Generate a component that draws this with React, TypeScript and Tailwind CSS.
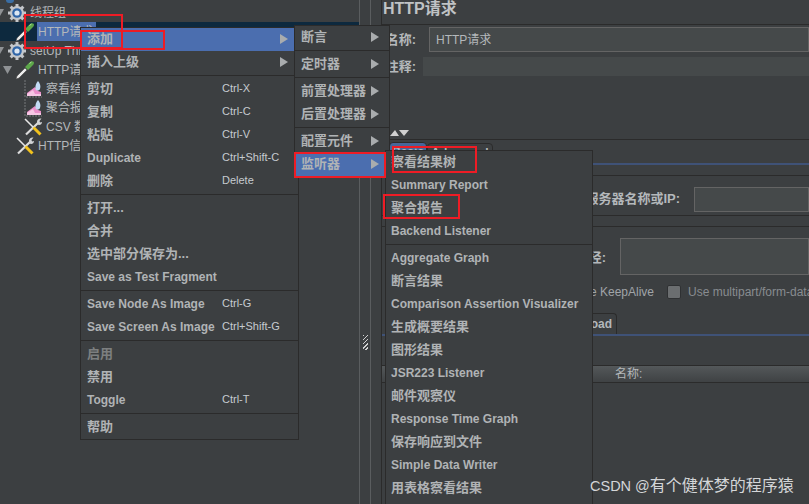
import React from "react";

const FONT = "[font-family:'Liberation_Sans','Noto_Sans_CJK_SC',sans-serif]";

type Item = { t?: string; k?: string; arrow?: boolean; hi?: boolean; dim?: boolean; sep?: boolean; h?: number };

const Arrow = () => (
  <svg width="8" height="10" viewBox="0 0 8 10" className="shrink-0">
    <path d="M0 0L8 5L0 10Z" fill="#a9acae" />
  </svg>
);

function Menu({ items, className, keyX, pad }: { items: Item[]; className: string; keyX?: string; pad?: string }) {
  return (
    <div className={`absolute flex flex-col border border-[#2b2b2b] bg-[#3c3f41] ${className}`}>
      {items.map((it, i) =>
        it.sep ? (
          <div key={i} className="mt-[1px] mb-[2px] h-[1px] shrink-0 bg-[#2b2b2b]" />
        ) : (
          <div
            key={i}
            className={`flex h-[23px] shrink-0 items-center pb-[2px] ${pad ?? "pl-[6px]"} pr-[10px] font-bold whitespace-nowrap ${
              /^[\x00-\x7f]+$/.test(it.t ?? "") ? "text-[12px]" : "text-[13px]"
            } ${it.hi ? "bg-[#4b6eaf]" : ""} ${it.dim ? "text-[#7d7f80]" : "text-[#b0b3b5]"}`}
          >
            <span className={`${keyX ?? ""} shrink-0`}>{it.t}</span>
            {it.k && <span className="text-[11px] font-normal text-[#c6cbd0]">{it.k}</span>}
            {it.arrow && (
              <span className="ml-auto">
                <Arrow />
              </span>
            )}
          </div>
        )
      )}
    </div>
  );
}

const Gear = () => (
  <svg width="18" height="18" viewBox="0 0 18 18" className="shrink-0">
    <g fill="#c4c7cb">
      <circle cx="9" cy="9" r="7" />
      {[0, 45, 90, 135, 180, 225, 270, 315].map((a) => (
        <rect key={a} x="7.5" y="0" width="3" height="4" transform={`rotate(${a} 9 9)`} />
      ))}
    </g>
    <circle cx="9" cy="9" r="4.8" fill="#2f65a8" />
    <circle cx="9" cy="9" r="2.6" fill="#dbe6f2" />
  </svg>
);

const Dropper = () => (
  <svg width="20" height="20" viewBox="0 0 20 20" className="shrink-0">
    <path d="M1 19L2 16L10 8L12 10L4 18Z" fill="#ececec" stroke="#4a4a4a" strokeWidth="0.6" />
    <path d="M10 7L15 2C16 1 18 1 18.6 1.8C19.4 2.6 19 4 18 5L13 10Z" fill="#5da84a" />
    <path d="M14.5 3.5L16.5 2" stroke="#b8e6a4" strokeWidth="1" />
  </svg>
);

const Graph = () => (
  <svg width="18" height="18" viewBox="0 0 18 18" className="shrink-0">
    <path d="M1 0V17H18" stroke="#777a7c" fill="none" strokeWidth="1" strokeDasharray="2 1" />
    <path d="M3 16V13L11 7L14 11L17 12V16Z" fill="#ea8fcb" />
    <path d="M3 16V14L9 10L11 14L17 14V16Z" fill="#f6c6e4" />
    <path d="M14 1C16 3 17 6 16 9C15 11 12.5 11 11.5 9C11 6 12 3 14 1Z" fill="#c4dcf6" />
  </svg>
);

const Tools = () => (
  <svg width="18" height="18" viewBox="0 0 18 18" className="shrink-0">
    <path d="M1 1L9 9" stroke="#e8e8e8" strokeWidth="1.6" />
    <path d="M15 4L2 16.5" stroke="#dcdcdc" strokeWidth="2.2" />
    <path d="M9.5 9.5L16.5 16.5" stroke="#f2c21d" strokeWidth="3" />
    <path d="M13 3.5C13 1.5 15 0 17.5 0.5L15.5 3L16 4.5L18 4C18 6.5 15.5 7.5 13.5 6.5Z" fill="#d2d4d6" />
  </svg>
);

const Tri = ({ c }: { c: string }) => (
  <svg width="9" height="8" viewBox="0 0 9 8" className={`shrink-0 ${c}`}>
    <path d="M0 0H9L4.5 8Z" fill="#8f9295" />
  </svg>
);

function Row({
  pad,
  icon,
  text,
  tri,
  selected,
  tight,
}: {
  pad: string;
  icon: React.ReactNode;
  text: string;
  tri?: string;
  selected?: boolean;
  tight?: boolean;
}) {
  return (
    <div className={`flex h-[19px] shrink-0 items-center ${pad} ${selected ? "bg-[#0d293e]" : ""}`}>
      {tri && <Tri c={tri} />}
      {icon}
      <span
        className={`${tight ? "ml-[2px]" : "ml-[3px]"} h-[19px] pr-[3px] pl-[1px] text-[12px] leading-[20px] whitespace-nowrap text-[#b4b8bb] ${
          selected ? "bg-[#4b6eaf]" : ""
        }`}
      >
        {text}
      </span>
    </div>
  );
}

const Red = ({ c }: { c: string }) => <div className={`absolute border-2 border-[#ee1c25] ${c}`} />;

const main: Item[] = [
  { t: "添加", arrow: true, hi: true },
  { t: "插入上级", arrow: true },
  { sep: true },
  { t: "剪切", k: "Ctrl-X" },
  { t: "复制", k: "Ctrl-C" },
  { t: "粘贴", k: "Ctrl-V" },
  { t: "Duplicate", k: "Ctrl+Shift-C" },
  { t: "删除", k: "Delete" },
  { sep: true },
  { t: "打开..." },
  { t: "合并" },
  { t: "选中部分保存为..." },
  { t: "Save as Test Fragment" },
  { sep: true },
  { t: "Save Node As Image", k: "Ctrl-G" },
  { t: "Save Screen As Image", k: "Ctrl+Shift-G" },
  { sep: true },
  { t: "启用", dim: true },
  { t: "禁用" },
  { t: "Toggle", k: "Ctrl-T" },
  { sep: true },
  { t: "帮助" },
];

const sub: Item[] = [
  { t: "断言", arrow: true },
  { sep: true },
  { t: "定时器", arrow: true },
  { sep: true },
  { t: "前置处理器", arrow: true },
  { t: "后置处理器", arrow: true },
  { sep: true },
  { t: "配置元件", arrow: true },
  { t: "监听器", arrow: true, hi: true },
];

const listeners: Item[] = [
  { t: "察看结果树" },
  { t: "Summary Report" },
  { t: "聚合报告" },
  { t: "Backend Listener" },
  { sep: true },
  { t: "Aggregate Graph" },
  { t: "断言结果" },
  { t: "Comparison Assertion Visualizer" },
  { t: "生成概要结果" },
  { t: "图形结果" },
  { t: "JSR223 Listener" },
  { t: "邮件观察仪" },
  { t: "Response Time Graph" },
  { t: "保存响应到文件" },
  { t: "Simple Data Writer" },
  { t: "用表格察看结果" },
];

export default function App() {
  return (
    <div className={`relative flex h-[504px] w-[809px] overflow-hidden bg-[#3c3f41] ${FONT}`}>
      {/* tree */}
      <div className="relative flex w-[360px] shrink-0 flex-col border-r border-[#5a5d5f] pt-[3px]">
        <div className="absolute top-0 left-[6px] h-[3px] w-[8px] rounded-b-sm bg-[#3a6ea5]" />
        <Row pad="pl-0" tri="-ml-[5px] mr-[4px]" icon={<Gear />} text="线程组" />
        <Row pad="pl-[15px]" tight icon={<Dropper />} text="HTTP请求" selected />
        <Row pad="pl-0" tri="-ml-[5px] mr-[4px]" icon={<Gear />} text="setUp Thread Group" />
        <Row pad="pl-[3px]" tri="mr-[3px]" tight icon={<Dropper />} text="HTTP请求" />
        <Row pad="pl-[24px]" icon={<Graph />} text="察看结果树" />
        <Row pad="pl-[24px]" icon={<Graph />} text="聚合报告" />
        <Row pad="pl-[24px]" icon={<Tools />} text="CSV 数据文件设置" />
        <Row pad="pl-[16px]" icon={<Tools />} text="HTTP信息头管理器" />
      </div>

      {/* divider */}
      <div className="flex w-[11px] shrink-0 flex-col items-center border-r border-[#5a5d5f] pt-[335px]">
        <div className="h-[15px] w-[5px] bg-[repeating-linear-gradient(135deg,#d0d0d0_0_1px,#3c3f41_1px_3px)]" />
      </div>

      {/* form */}
      <div className="ml-[10px] flex min-w-0 flex-1 flex-col border-l border-[#2b2b2b] text-[#b4b8bb]">
        <div className="h-[25px] shrink-0 border-b border-[#2b2b2b] pt-[1px] pl-[1px] text-[16px] leading-[16px] font-bold text-[#c0c3c5]">
          HTTP请求
        </div>
        <div className="mt-[2px] flex h-[25px] shrink-0 items-center">
          <span className="w-[47px] shrink-0 pr-[13px] text-right text-[13px] font-bold whitespace-nowrap">名称:</span>
          <div className="flex h-[25px] flex-1 items-center border border-[#646464] bg-[#45494a] pl-[6px] text-[12px]">
            HTTP请求
          </div>
        </div>
        <div className="mt-[5px] flex h-[19px] shrink-0 items-center">
          <span className="w-[41px] shrink-0 pr-[7px] text-right text-[13px] font-bold whitespace-nowrap">注释:</span>
          <div className="h-[19px] flex-1 bg-[#45494a]" />
        </div>
        <div className="mt-[54px] flex h-[9px] shrink-0 pl-[8px]">
          <svg width="20" height="6" viewBox="0 0 20 6" className="shrink-0">
            <path d="M0 6L5 0L9 6Z" fill="#d0d0d0" />
            <path d="M9 0H19L14 6Z" fill="#d0d0d0" />
          </svg>
        </div>
        <div className="flex h-[24px] shrink-0 items-start border-t border-[#2b2b2b] pt-[2px]">
          <div className="ml-[7px] h-[21px] w-[38px] rounded-t border border-[#2b2b2b] bg-[#47669a] text-center text-[12px] font-bold">
            Basic
          </div>
          <div className="mt-[1px] h-[20px] w-[66px] rounded-t border border-[#2b2b2b] text-center text-[12px] font-bold">
            Advanced
          </div>
        </div>
        <div className="h-[2px] shrink-0 bg-[#3f5277]" />
        <div className="mt-[10px] flex h-[41px] shrink-0 items-start justify-end border-y border-[#2b2b2b] pt-[11px]">
          <span className="mr-[14px] text-[13px] leading-[24px] font-bold whitespace-nowrap">服务器名称或IP:</span>
          <div className="h-[25px] w-[115px] shrink-0 border border-[#646464] bg-[#45494a]" />
        </div>
        <div className="mt-[10px] flex h-[49px] shrink-0 items-start justify-end border-t border-[#2b2b2b] pt-[11px]">
          <span className="mt-[10px] mr-[14px] text-[13px] font-bold whitespace-nowrap">路径:</span>
          <div className="h-[37px] w-[189px] shrink-0 border border-[#646464] bg-[#45494a]" />
        </div>
        <div className="mt-[10px] flex h-[14px] shrink-0 items-center justify-end text-[12px] whitespace-nowrap text-[#a0a4a8]">
          <span className="mr-[13px]">Use KeepAlive</span>
          <span className="mr-[7px] h-[14px] w-[14px] shrink-0 rounded-[2px] border border-[#2f3133] bg-[#6b6e70]" />
          <span className="w-[121px] shrink-0 overflow-hidden text-[#888c90]">Use multipart/form-data for POST</span>
        </div>
        <div className="mt-[14px] flex h-[23px] shrink-0 items-end border-b-[2px] border-[#3f5277]">
          <div className="ml-[200px] flex h-[21px] w-[35px] items-center justify-end rounded-tr border-t border-r border-[#2b2b2b] pr-[4px] text-[12px] font-bold whitespace-nowrap">
            Upload
          </div>
        </div>
        <div className="mt-[29px] flex h-[18px] shrink-0 items-center border-y border-[#2b2b2b] bg-gradient-to-b from-[#54585a] to-[#3f4244] pl-[233px] text-[12px]">
          名称:
        </div>
      </div>

      {/* menus */}
      <Menu className="top-[27px] left-[80px] w-[219px]" items={main} keyX="w-[135px]" />
      <Menu className="top-[25px] left-[294px] w-[96px] pb-[1px]" items={sub} />
      <Menu className="top-[150px] left-[385px] h-[360px] w-[208px]" items={listeners} pad="pl-[5px]" />

      {/* annotation boxes */}
      <Red c="top-[14px] left-[24px] h-[35px] w-[99px]" />
      <Red c="top-[30px] left-[80px] h-[20px] w-[85px]" />
      <Red c="top-[152px] left-[294px] h-[26px] w-[92px]" />
      <Red c="top-[146px] left-[392px] h-[27px] w-[85px]" />
      <Red c="top-[194px] left-[383px] h-[25px] w-[77px]" />

      {/* watermark */}
      <div className="absolute top-[476px] left-[590px] text-[14.5px] leading-[20px] whitespace-nowrap text-[#d4d6d8]">
        CSDN @<span className="text-[16px]">有个健体梦的程序猿</span>
      </div>
    </div>
  );
}
